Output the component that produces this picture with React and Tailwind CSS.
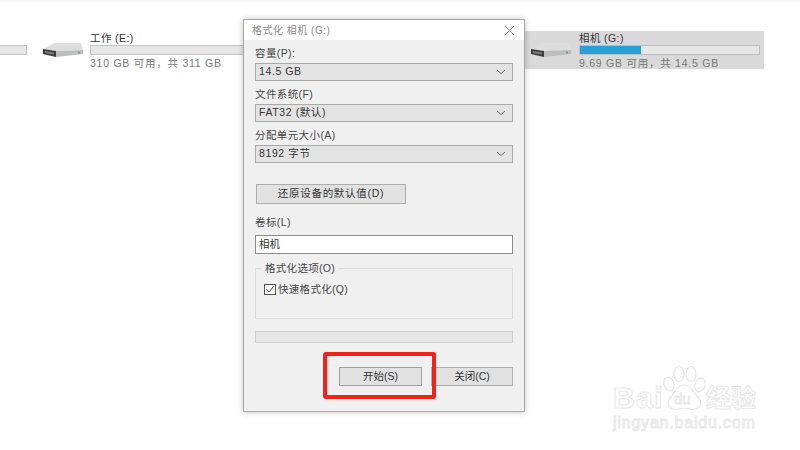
const cjk = "font-['Liberation_Sans','Noto_Sans_CJK_SC',sans-serif]";

function DriveIcon() {
  return (
    <svg width="42" height="16" viewBox="0 0 42 16" className="shrink-0">
      <path d="M1 7 L12 1 H39 L41 8 L14 9 Z" fill="#dcdede" />
      <path d="M1 7 L14 9 V15 L1 12 Z" fill="#3c3c3c" />
      <path d="M14 9 L41 8 V12 L14 15 Z" fill="#bcbebe" />
      <path d="M3 9 L12 10.5 V12.5 L3 11 Z" fill="#7d7d7d" />
      <rect x="36" y="9.5" width="2" height="2" fill="#6f9f7a" />
    </svg>
  );
}

function Combo({ value }) {
  return (
    <div className="flex h-[18px] w-[258px] items-center justify-between border border-[#a9a9a9] bg-[#e3e3e3] pl-[3px] pr-[6px] text-[10.5px] tracking-[0.6px] text-[#333]">
      <span>{value}</span>
      <svg width="10" height="6" viewBox="0 0 10 6">
        <path d="M1 1 L5 4.5 L9 1" fill="none" stroke="#666" strokeWidth="1" />
      </svg>
    </div>
  );
}

function Label({ className, children }) {
  return <div className={`flex h-[14px] items-center text-[10.5px] tracking-[0.4px] text-[#444] ${className}`}>{children}</div>;
}

function Watermark() {
  const outline = "text-white [-webkit-text-stroke:1px_#e8e8e8]";
  return (
    <div className={`absolute left-[613px] top-[365px] w-[146px] ${cjk}`}>
      <div className="flex h-[46px] items-end">
        <span className={`mb-[-3px] w-[49px] text-[30px] font-bold leading-[32px] tracking-[1.5px] ${outline}`}>Bai</span>
        <div className="relative h-[46px] w-[44px]">
          <svg width="44" height="46" viewBox="0 0 44 46" className="absolute left-0 top-0">
            <g fill="#fff" stroke="#e6e6e6" strokeWidth="1.2">
              <ellipse cx="7" cy="19" rx="5" ry="7" transform="rotate(-20 7 19)" />
              <ellipse cx="17" cy="9" rx="5" ry="7.5" />
              <ellipse cx="29" cy="9" rx="5" ry="7.5" />
              <ellipse cx="38" cy="20" rx="5" ry="7" transform="rotate(20 38 20)" />
              <path d="M22 20 C30 20 32 29 37 33 C42 40 34 46 28 44 C24 43 20 43 16 44 C9 46 3 40 8 33 C12 29 14 20 22 20 Z" />
            </g>
          </svg>
          <span className={`absolute bottom-[3px] left-[12px] text-[15px] leading-[18px] ${outline}`}>du</span>
        </div>
        <span className={`mb-[-2px] text-[25px] font-bold leading-[30px] ${outline}`}>经验</span>
      </div>
      <div className={`mt-[3px] whitespace-nowrap text-[16px] leading-[18px] tracking-[0.8px] ${outline}`}>jingyan.baidu.com</div>
    </div>
  );
}

export default function App() {
  return (
    <div className={`relative h-[450px] w-[800px] overflow-hidden bg-white ${cjk}`}>
      <div className="h-[2px] bg-[#f4f4f4]" />

      {/* drive row */}
      <div className="flex pt-[29px]">
        <div className="mt-[14px] h-[10px] w-[27px] border border-l-0 border-[#c4c4c4] bg-[#e6e6e6]" />
        <div className="ml-[15px] flex h-[38px] w-[216px] items-center">
          <DriveIcon />
          <div className="ml-[6px] shrink-0">
            <div className="h-[14px] text-[10.5px] leading-[14px] tracking-[0.4px] text-[#333]">工作 (E:)</div>
            <div className="h-[10px] w-[200px] border border-[#c4c4c4] bg-[#e6e6e6]" />
            <div className="mt-[1px] text-[10.5px] leading-[14px] tracking-[0.75px] text-[#777]">310 GB 可用，共 311 GB</div>
          </div>
        </div>
        <div className="ml-[267px] flex h-[38px] w-[239px] items-center bg-[#d9d9d9] pl-[5px]">
          <DriveIcon />
          <div className="ml-[7px]">
            <div className="h-[14px] text-[10.5px] leading-[14px] tracking-[0.4px] text-[#333]">相机 (G:)</div>
            <div className="h-[10px] w-[181px] border border-[#bdbdbd] bg-[#e6e6e6]">
              <div className="h-full w-[61px] bg-[#26a0da]" />
            </div>
            <div className="mt-[1px] text-[10.5px] leading-[14px] tracking-[0.75px] text-[#777]">9.69 GB 可用，共 14.5 GB</div>
          </div>
        </div>
      </div>

      {/* format dialog */}
      <div className="absolute left-[243px] top-[19px] h-[393px] w-[282px] border border-[#a8a8a8] bg-[#f0f0f0] shadow-[0_0_6px_rgba(0,0,0,0.25)]">
        <div className="flex h-[20px] items-center justify-between bg-white pl-[8px] pr-[9px] text-[10px] tracking-[0.5px] text-[#8a8a8a]">
          <span>格式化 相机 (G:)</span>
          <svg width="11" height="11" viewBox="0 0 11 11">
            <path d="M1 1 L10 10 M10 1 L1 10" stroke="#888" strokeWidth="0.9" />
          </svg>
        </div>

        <div className="px-[11px]">
          <Label className="mt-[7px]">容量(P):</Label>
          <div className="mt-[2px]"><Combo value="14.5 GB" /></div>
          <Label className="mt-[7px]">文件系统(F)</Label>
          <div className="mt-[2px]"><Combo value="FAT32 (默认)" /></div>
          <Label className="mt-[7px]">分配单元大小(A)</Label>
          <div className="mt-[2px]"><Combo value="8192 字节" /></div>

          <button className="ml-[1px] mt-[21px] block h-[20px] w-[150px] border border-[#adadad] bg-[#e1e1e1] text-[10.5px] tracking-[0.7px] text-[#333]">
            还原设备的默认值(D)
          </button>

          <Label className="mt-[12px]">卷标(L)</Label>
          <div className="mt-[5px] flex h-[19px] w-[258px] items-center border border-[#8a8a8a] bg-white pl-[3px] text-[10.5px] text-[#333]">
            相机
          </div>

          <div className="relative mt-[14px] h-[51px] w-[258px] border border-[#dcdcdc]">
            <div className="absolute left-[6px] top-[-7px] bg-[#f0f0f0] px-[3px] text-[10.5px] leading-[13px] tracking-[0.3px] text-[#444]">格式化选项(O)</div>
            <div className="ml-[8px] mt-[14px] flex items-center">
              <svg width="12" height="11" viewBox="0 0 12 11">
                <rect x="0.5" y="0.5" width="11" height="10" fill="#fff" stroke="#555" />
                <path d="M2.5 5 L5 8 L9.5 2.5" fill="none" stroke="#444" strokeWidth="1" />
              </svg>
              <span className="ml-[2px] text-[10.5px] leading-[13px] tracking-[0.3px] text-[#444]">快速格式化(Q)</span>
            </div>
          </div>

          <div className="mt-[12px] h-[12px] w-[258px] border border-[#cfcfcf] bg-[#e6e6e6]" />

          <div className="mt-[24px] flex justify-end gap-[9px]">
            <button className="h-[19px] w-[83px] border border-[#a0a0a0] bg-[#e1e1e1] text-[10.5px] text-[#333]">开始(S)</button>
            <button className="h-[19px] w-[82px] border border-[#adadad] bg-[#e1e1e1] text-[10.5px] text-[#333]">关闭(C)</button>
          </div>
        </div>

        {/* red highlight drawn on top of the screenshot */}
        <div className="absolute left-[79px] top-[332px] h-[47px] w-[113px] rounded-[3px] border-[4px] border-[#f5201a]" />
      </div>

      <Watermark />
    </div>
  );
}
